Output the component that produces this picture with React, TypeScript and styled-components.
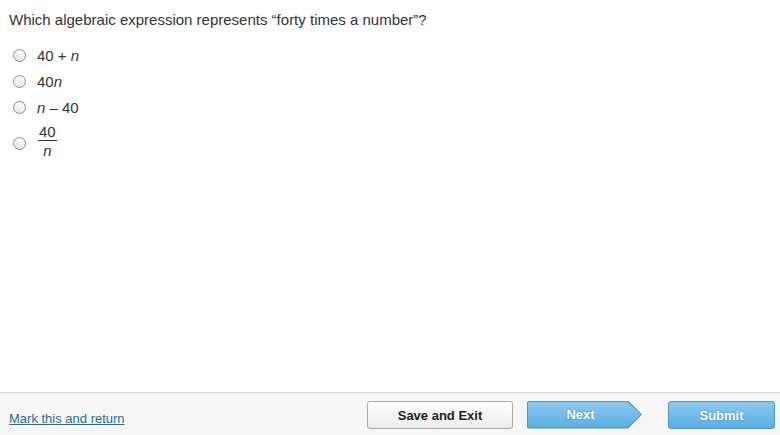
import React from "react";
import styled, { createGlobalStyle } from "styled-components";

const GlobalStyle = createGlobalStyle`
  html, body {
    margin: 0;
    padding: 0;
    background: #fff;
  }
  body {
    font-family: "Liberation Sans", Arial, sans-serif;
  }
`;

const Page = styled.div`
  width: 780px;
  height: 435px;
  display: flex;
  flex-direction: column;
  overflow: hidden;
`;

const Content = styled.div`
  flex: 1;
  padding: 11px 9px 0;
`;

const Question = styled.div`
  font-size: 15px;
  color: #333;
  line-height: 18px;
  margin-bottom: 13px;
`;

const Options = styled.div`
  display: flex;
  flex-direction: column;
`;

const Option = styled.label<{ $tall?: boolean }>`
  display: flex;
  align-items: center;
  height: ${(p) => (p.$tall ? "36px" : "26px")};
  padding-left: 4px;
  font-size: 15px;
  color: #333;
  margin-top: ${(p) => (p.$tall ? "3px" : "0")};
`;

const Radio = styled.span<{ $low?: boolean }>`
  width: 11px;
  height: 11px;
  border-radius: 50%;
  border: 1px solid #8a8a8a;
  background: linear-gradient(#fafafa, #e8e8e8);
  box-sizing: content-box;
  margin-right: 11px;
  margin-top: ${(p) => (p.$low ? "4px" : "0")};
  flex-shrink: 0;
`;

const Var = styled.i`
  font-style: italic;
`;

const Fraction = styled.span`
  display: inline-flex;
  flex-direction: column;
  align-items: center;
  font-size: 15px;
  line-height: 15px;
  margin-left: 1px;
`;

const Numer = styled.span`
  border-bottom: 1px solid #333;
  padding: 0 1px 1px;
`;

const Denom = styled.span`
  padding-top: 2px;
`;

const Footer = styled.div`
  height: 42px;
  border-top: 1px solid #d4d4d4;
  background: #f6f6f6;
  display: flex;
  align-items: center;
  padding: 0 5px 0 9px;
`;

const MarkLink = styled.a`
  font-size: 13px;
  color: #2c6e8e;
  text-decoration: underline;
  margin-top: 8px;
  margin-right: auto;
  cursor: pointer;
`;

const SaveButton = styled.button`
  width: 146px;
  height: 28px;
  border: 1px solid #a8a8a8;
  border-radius: 3px;
  background: linear-gradient(#ffffff, #ececec);
  font-family: "Liberation Sans", Arial, sans-serif;
  font-size: 13px;
  font-weight: bold;
  color: #222;
  margin-right: 14px;
  margin-top: 2px;
`;

const NextOuter = styled.div`
  width: 115px;
  height: 28px;
  background: #4f94c4;
  clip-path: polygon(0 0, 88% 0, 100% 50%, 88% 100%, 0 100%);
  border-radius: 2px;
  margin-right: 26px;
  margin-top: 1px;
  display: flex;
`;

const NextInner = styled.button`
  margin: 1px;
  flex: 1;
  border: none;
  background: linear-gradient(#8ccaee, #5aaee3);
  clip-path: polygon(0 0, 87.7% 0, 100% 50%, 87.7% 100%, 0 100%);
  font-family: "Liberation Sans", Arial, sans-serif;
  font-size: 13px;
  font-weight: bold;
  color: #fff;
  text-shadow: 0 0 2px #3d7ea8;
  padding-right: 14px;
`;

const SubmitButton = styled.button`
  width: 107px;
  height: 28px;
  border: 1px solid #4f94c4;
  border-radius: 3px;
  background: linear-gradient(#8ccaee, #5aaee3);
  font-family: "Liberation Sans", Arial, sans-serif;
  font-size: 13px;
  font-weight: bold;
  color: #fff;
  text-shadow: 0 0 2px #3d7ea8;
  margin-top: 2px;
`;

const App: React.FC = () => {
  return (
    <>
      <GlobalStyle />
      <Page>
        <Content>
          <Question>Which algebraic expression represents “forty times a number”?</Question>
          <Options>
            <Option>
              <Radio />
              40 + <Var>&nbsp;n</Var>
            </Option>
            <Option>
              <Radio />
              40<Var>n</Var>
            </Option>
            <Option>
              <Radio />
              <Var>n</Var>&nbsp;– 40
            </Option>
            <Option $tall>
              <Radio $low />
              <Fraction>
                <Numer>40</Numer>
                <Denom>
                  <Var>n</Var>
                </Denom>
              </Fraction>
            </Option>
          </Options>
        </Content>
        <Footer>
          <MarkLink>Mark this and return</MarkLink>
          <SaveButton>Save and Exit</SaveButton>
          <NextOuter>
            <NextInner>Next</NextInner>
          </NextOuter>
          <SubmitButton>Submit</SubmitButton>
        </Footer>
      </Page>
    </>
  );
};

export default App;
